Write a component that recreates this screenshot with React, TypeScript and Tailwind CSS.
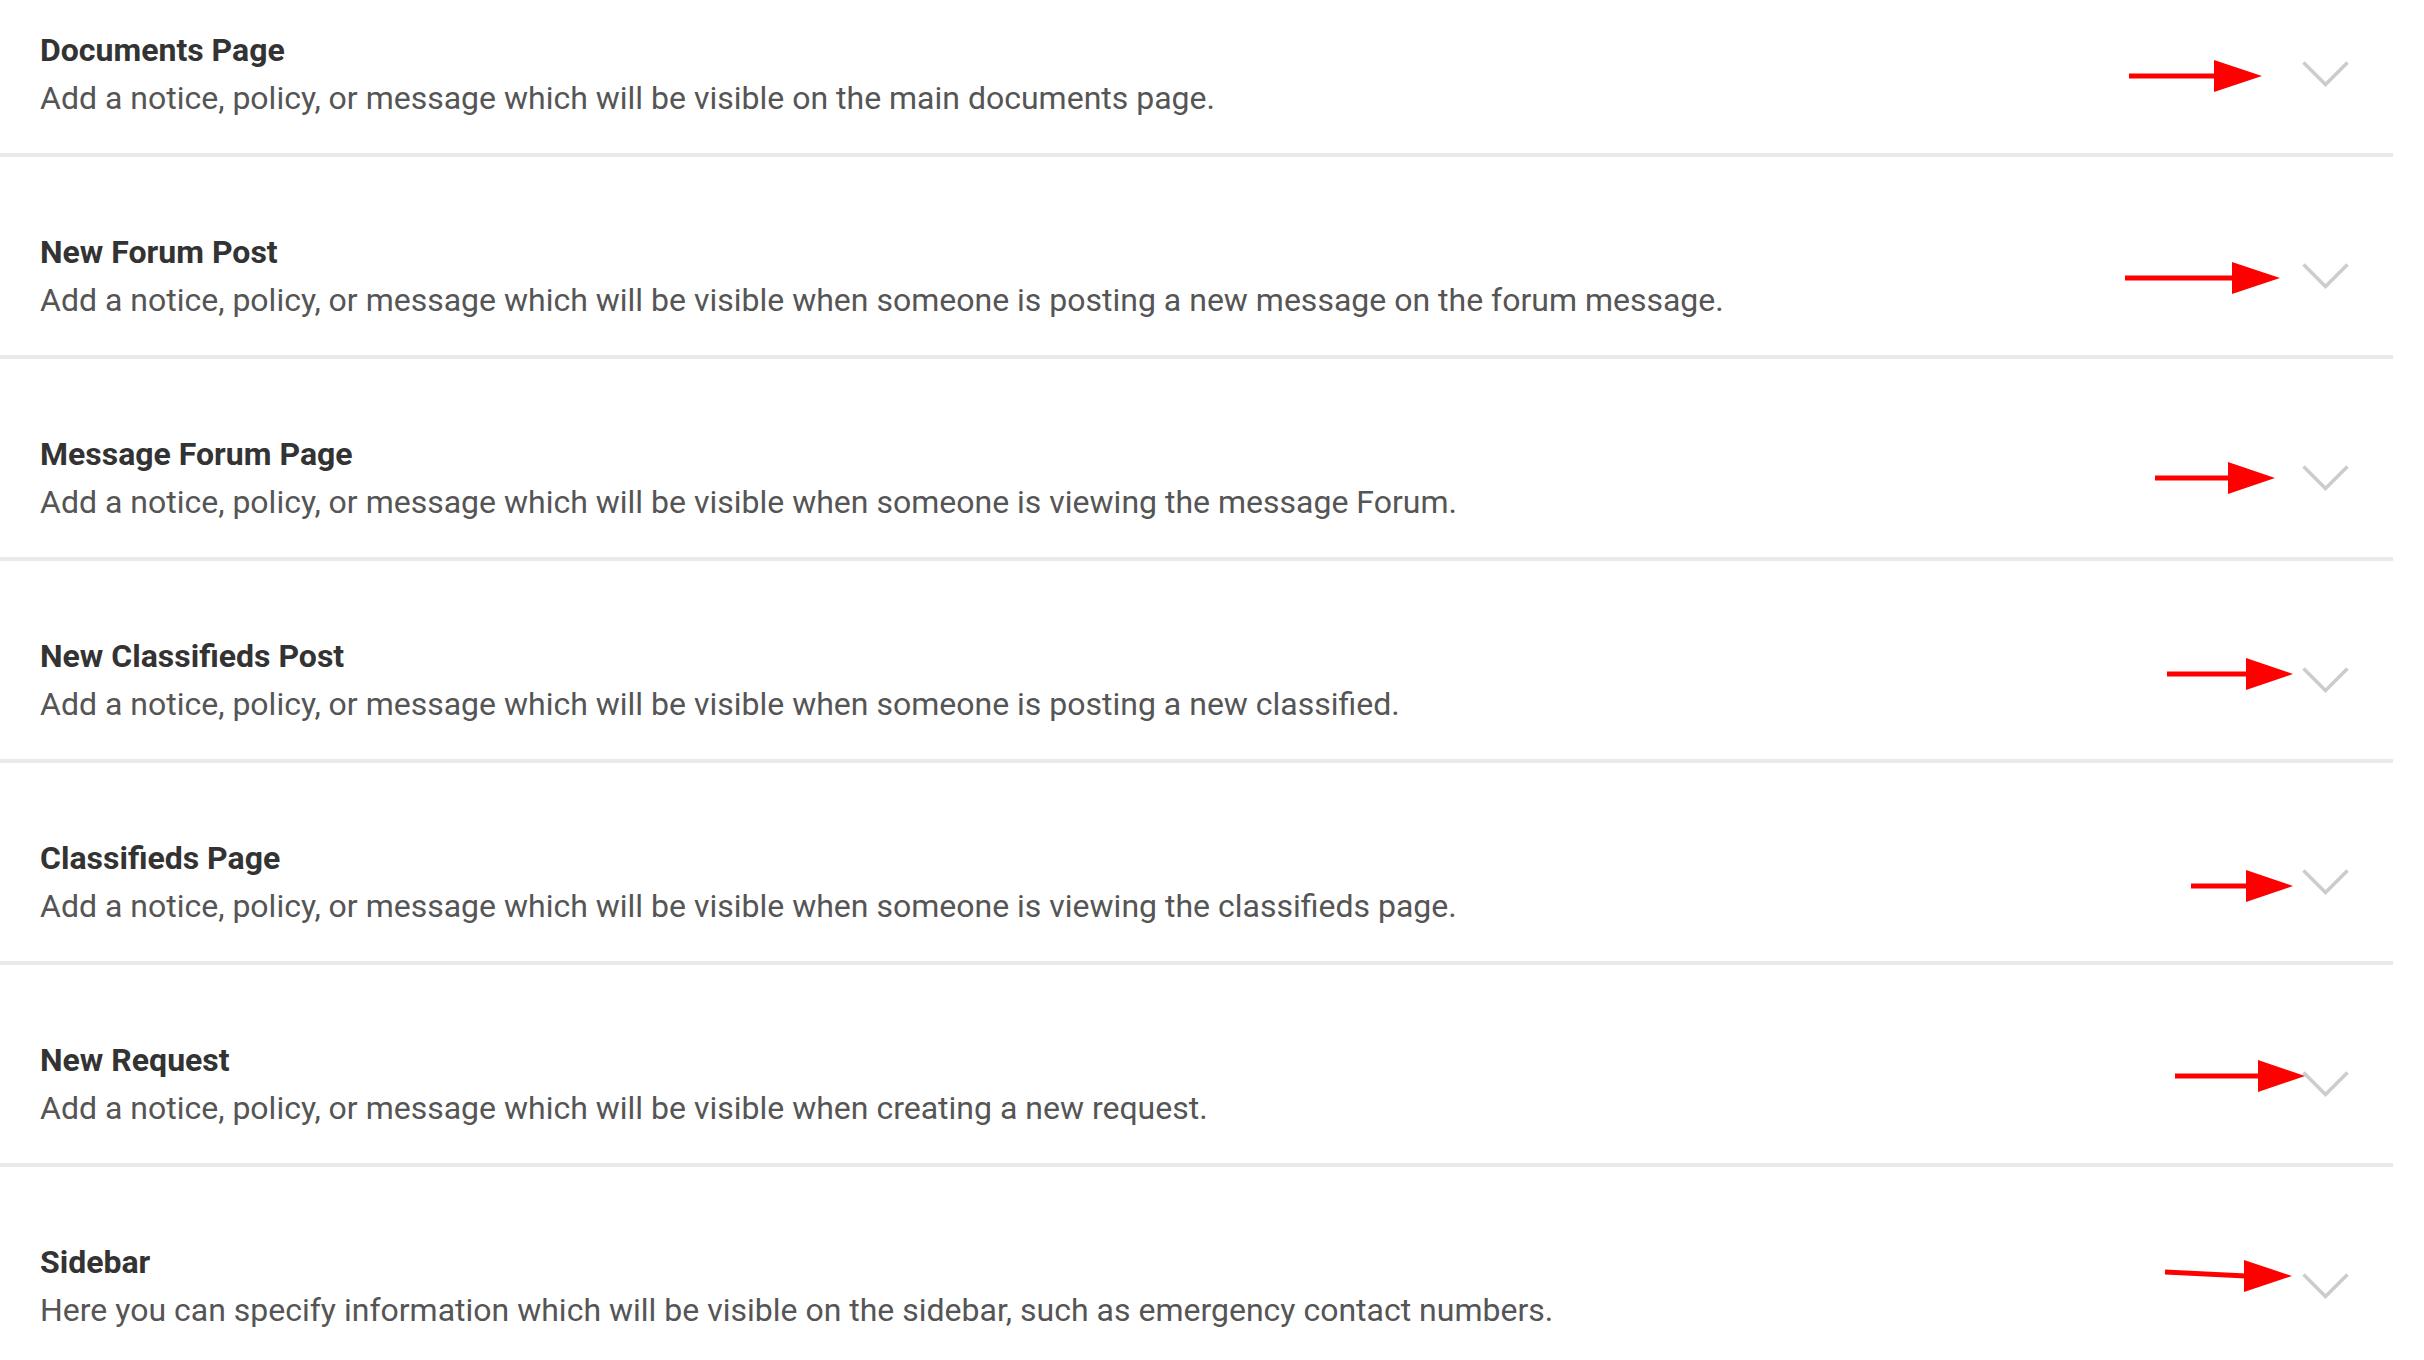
import React from "react";

type Arrow = { x1: number; y1: number; base: number; tip: number; ty: number };

type Notice = {
  title: string;
  text: string;
  arrow: Arrow;
};

const notices: Notice[] = [
  {
    title: "Documents Page",
    text: "Add a notice, policy, or message which will be visible on the main documents page.",
    arrow: { x1: 2129, y1: 121, base: 2214, tip: 2262, ty: 121 },
  },
  {
    title: "New Forum Post",
    text: "Add a notice, policy, or message which will be visible when someone is posting a new message on the forum message.",
    arrow: { x1: 2125, y1: 121, base: 2232, tip: 2280, ty: 121 },
  },
  {
    title: "Message Forum Page",
    text: "Add a notice, policy, or message which will be visible when someone is viewing the message Forum.",
    arrow: { x1: 2155, y1: 119, base: 2228, tip: 2275, ty: 119 },
  },
  {
    title: "New Classifieds Post",
    text: "Add a notice, policy, or message which will be visible when someone is posting a new classified.",
    arrow: { x1: 2167, y1: 113, base: 2246, tip: 2293, ty: 113 },
  },
  {
    title: "Classifieds Page",
    text: "Add a notice, policy, or message which will be visible when someone is viewing the classifieds page.",
    arrow: { x1: 2191, y1: 123, base: 2246, tip: 2293, ty: 123 },
  },
  {
    title: "New Request",
    text: "Add a notice, policy, or message which will be visible when creating a new request.",
    arrow: { x1: 2175, y1: 111, base: 2258, tip: 2305, ty: 111 },
  },
  {
    title: "Sidebar",
    text: "Here you can specify information which will be visible on the sidebar, such as emergency contact numbers.",
    arrow: { x1: 2165, y1: 105, base: 2244, tip: 2292, ty: 109 },
  },
];

// red pointer drawn over the row
const ArrowMark: React.FC<{ a: Arrow }> = ({ a }) => (
  <svg
    className="pointer-events-none absolute inset-0 h-full w-full"
    viewBox="0 0 2393 198"
    preserveAspectRatio="none"
  >
    <line x1={a.x1} y1={a.y1} x2={a.base + 2} y2={a.ty} stroke="#ff0000" strokeWidth={5} />
    <polygon
      points={`${a.base},${a.ty - 16} ${a.tip},${a.ty} ${a.base},${a.ty + 16}`}
      fill="#ff0000"
    />
  </svg>
);

const Chevron: React.FC = () => (
  <svg width="47" height="26" viewBox="0 0 47 26" className="shrink-0">
    <polyline
      points="1.5,1.5 23.5,23.5 45.5,1.5"
      fill="none"
      stroke="#cccccc"
      strokeWidth={3.5}
    />
  </svg>
);

const NoticeRow: React.FC<{ item: Notice }> = ({ item }) => (
  <div className="relative flex items-center justify-between border-b-4 border-[#e9e9e9] pb-[31px] pl-[40px] pr-[44px] pt-[71px]">
    <div className="flex flex-col text-[32px] leading-[48px]">
      <span className="font-bold text-[#333333]">{item.title}</span>
      <span className="text-[#555555]">{item.text}</span>
    </div>
    <Chevron />
    <ArrowMark a={item.arrow} />
  </div>
);

const App: React.FC = () => {
  return (
    <div className="h-[1360px] w-[2424px] overflow-hidden bg-white pr-[31px] font-['Roboto',sans-serif]">
      <div className="-mt-[45px] flex flex-col">
        {notices.map((n) => (
          <NoticeRow key={n.title} item={n} />
        ))}
      </div>
    </div>
  );
};

export default App;
